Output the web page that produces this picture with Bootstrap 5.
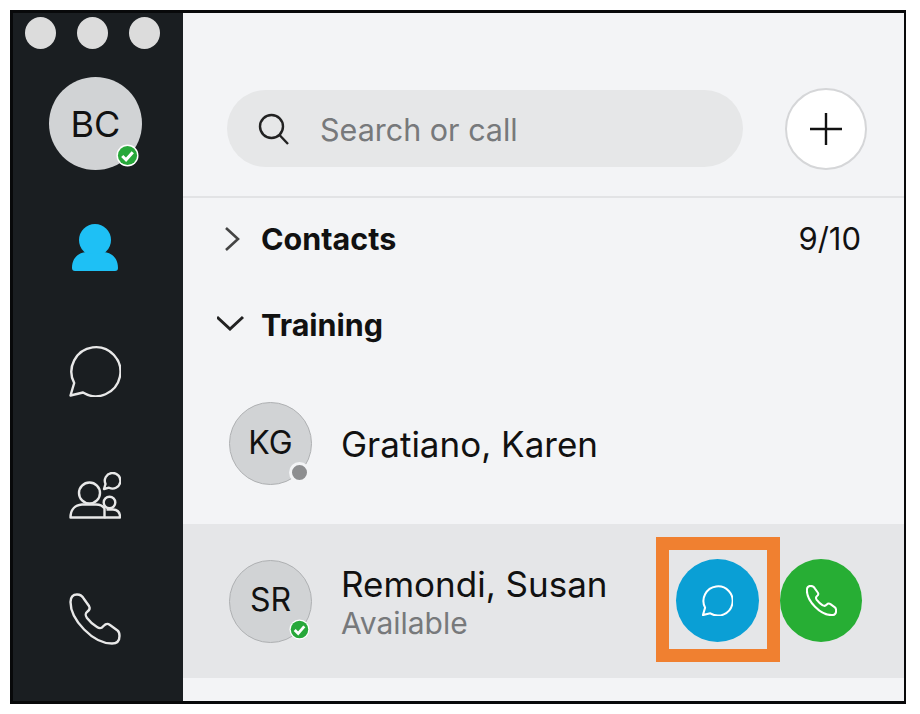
<!DOCTYPE html>
<html>
<head>
  <title>Contacts</title>
  <meta charset="UTF-8">
  <link href="https://cdn.jsdelivr.net/npm/bootstrap@5.3.0/dist/css/bootstrap.min.css" rel="stylesheet">
  <style>
    body { background: #fff; font-family: Inter, "Liberation Sans", sans-serif; color: #111; }
    .app-frame { position: relative; margin: 10px 0 0 10px; width: 896px; height: 694px; border: 3px solid #08090a; border-right-width: 2px; overflow: hidden; }
    .side-rail { width: 170px; background: #1a1e21; color: #e8e8e8; }
    .light-row { padding: 4px 0 0 12px; gap: 21px; }
    .light-dot { width: 31px; height: 32px; border-radius: 50%; background: #dcdcdc; }
    .rail-icon { display: block; margin-left: 56px; width: 52px; height: 52px; stroke-width: 2.4; }
    .me-avatar { margin: 28px 0 0 36px; width: 93px; height: 93px; background: #d1d3d5; color: #111; font-size: 36px; }
    .face { position: relative; border-radius: 50%; }
    .face-sm { width: 83px; height: 83px; padding-bottom: 2px; background: #d1d3d5; border: 1px solid #aeb0b2; font-size: 32px; flex: none; }
    .state-dot { position: absolute; right: 1px; bottom: 2px; width: 21px; height: 21px; }
    .state-me { right: 3px; bottom: 3px; width: 23px; height: 23px; }
    .state-off { bottom: 1px; border-radius: 50%; background: #8d8e90; border: 3px solid #f3f4f6; }
    .main-pane { background: #f3f4f6; }
    .top-bar { height: 185px; padding: 75px 37px 0 44px; border-bottom: 2px solid #e2e3e5; }
    .search-pill { width: 516px; height: 77px; margin-top: 2px; padding-left: 31px; background: #e6e7e8; border-radius: 39px; color: #77797b; font-size: 30.5px; }
    .search-pill span { margin-left: 30px; padding-top: 3px; }
    .add-btn { width: 82px; height: 82px; border-radius: 50%; background: #fff; border: 2px solid #d5d6d8; }
    .group-row { padding-left: 34px; font-size: 30.5px; line-height: 44px; }
    .group-name { font-weight: 700; }
    .group-count { font-size: 31px; }
    .name-col { margin-left: 29px; }
    .name-text { font-size: 35px; line-height: 40px; }
    .sub-text { font-size: 30px; line-height: 38px; color: #77797b; }
    .person-row { padding-left: 46px; }
    .person-active { height: 154px; background: #e5e6e8; }
    .person-lines { padding-top: 4px; }
    .act-group { margin: 0 42px 1px 0; gap: 21px; }
    .round-act { width: 83px; height: 83px; border-radius: 50%; }
    .act-chat { background: #0a9fd5; }
    .act-call { width: 82px; background: #27ae34; }
    .act-icon { width: 31px; height: 31px; stroke-width: 3.4; }
    .mark-box { position: absolute; left: 643px; top: 524px; width: 124px; height: 125px; border: 13px solid #f08030; }
  </style>
</head>
<body>

<svg width="0" height="0" class="position-absolute">
  <symbol id="i-chat" viewBox="0 0 52 52"><path d="M1.5 50.5 5.2 38A24.5 24.5 0 1 1 14 47.5Z" fill="none" stroke="currentColor" stroke-linejoin="round"/></symbol>
  <symbol id="i-phone" viewBox="0 0 52 52"><path d="M1.5 9C1.5 4 4 1.5 8 1.5 12 1.5 13.5 3 15 6L20 13C21.5 15.5 20.5 17 18.5 18.5 16 20.5 16 22 18 25 21 29 24 31.5 28 34 31 36 32.5 35.5 34.5 33 36.5 31 38 30 41 32L48.5 37.5C50.5 39 50.5 41 50.5 43 50.5 48 47.5 50.5 43 50.5 24 50.5 1.5 27 1.5 9Z" fill="none" stroke="currentColor" stroke-linejoin="round"/></symbol>
  <symbol id="i-check" viewBox="0 0 24 24"><circle cx="12" cy="12" r="11.5" fill="#fff"/><circle cx="12" cy="12" r="10" fill="#27a83a"/><path d="M6.5 12.5 10.5 16.5 17.5 8.5" fill="none" stroke="#fff" stroke-width="3.2"/></symbol>
</svg>

<div class="app-frame d-flex">
  <div class="side-rail flex-shrink-0">
    <div class="light-row d-flex">
      <div class="light-dot"></div>
      <div class="light-dot"></div>
      <div class="light-dot"></div>
    </div>
    <div class="face me-avatar d-flex align-items-center justify-content-center">BC
      <svg class="state-dot state-me"><use href="#i-check"/></svg>
    </div>
    <svg class="rail-icon" style="margin-top:53px" viewBox="0 0 52 52"><circle cx="26" cy="17" r="16" fill="#1ec0f5"/><path d="M3 45C3 35 9 30 17 29 21 31 31 31 35 29 43 30 49 35 49 45 49 47 48 48 46 48H6C4 48 3 47 3 45Z" fill="#1ec0f5"/></svg>
    <svg class="rail-icon" style="margin-top:70px"><use href="#i-chat"/></svg>
    <svg class="rail-icon" style="margin-top:75px" viewBox="0 0 52 52" fill="none" stroke="currentColor" stroke-linejoin="round">
      <circle cx="20.5" cy="21" r="10.5"/>
      <path d="M1.5 45.5C1.5 37.5 6 33 13 32.500H27C31 32.500 34 34 35.5 36.500V45.500Z"/>
      <path d="M35.5 45.500H51C51 41 49 37.500 44 37.500H37.500"/>
      <circle cx="40.500" cy="30.500" r="5.800"/>
      <path d="M35 17 36.500 12A7.800 7.800 0 1 1 40 15.700Z"/>
    </svg>
    <svg class="rail-icon" style="margin-top:69px"><use href="#i-phone"/></svg>
  </div>

  <div class="main-pane flex-grow-1">
    <div class="top-bar d-flex justify-content-between align-items-start">
      <div class="search-pill d-flex align-items-center">
        <svg width="32" height="32" viewBox="0 0 32 32" fill="none" stroke="#222" stroke-width="2.4"><circle cx="13.5" cy="13.5" r="11.5"/><path d="M21.5 22 30 31"/></svg>
        <span>Search or call</span>
      </div>
      <div class="add-btn d-flex align-items-center justify-content-center">
        <svg width="34" height="34" viewBox="0 0 34 34" stroke="#111" stroke-width="2.4"><path d="M17 1V33M1 17H33"/></svg>
      </div>
    </div>

    <div class="group-row d-flex align-items-center" style="margin-top:19px;padding-right:43px">
      <svg width="44" height="26" viewBox="0 0 44 26" fill="none" stroke="#444" stroke-width="2.6"><path d="M9 2 21 13 9 24"/></svg>
      <span class="group-name flex-grow-1">Contacts</span>
      <span class="group-count">9/10</span>
    </div>

    <div class="group-row d-flex align-items-center" style="margin-top:42px">
      <svg width="44" height="16" viewBox="0 0 44 16" fill="none" stroke="#222" stroke-width="3" style="margin-top:-4px"><path d="M0 2 13 14 26 2"/></svg>
      <span class="group-name">Training</span>
    </div>

    <div class="person-row d-flex align-items-center" style="margin-top:55px">
      <div class="face face-sm d-flex align-items-center justify-content-center">KG
        <div class="state-dot state-off"></div>
      </div>
      <div class="name-text name-col">Gratiano, Karen</div>
    </div>

    <div class="person-row person-active d-flex align-items-center" style="margin-top:39px">
      <div class="face face-sm d-flex align-items-center justify-content-center">SR
        <svg class="state-dot"><use href="#i-check"/></svg>
      </div>
      <div class="person-lines name-col flex-grow-1">
        <div class="name-text">Remondi, Susan</div>
        <div class="sub-text">Available</div>
      </div>
      <div class="act-group d-flex">
        <div class="round-act act-chat d-flex align-items-center justify-content-center text-white">
          <svg class="act-icon"><use href="#i-chat"/></svg>
        </div>
        <div class="round-act act-call d-flex align-items-center justify-content-center text-white">
          <svg class="act-icon"><use href="#i-phone"/></svg>
        </div>
      </div>
    </div>
  </div>

  <div class="mark-box"></div>
</div>

</body>
</html>
